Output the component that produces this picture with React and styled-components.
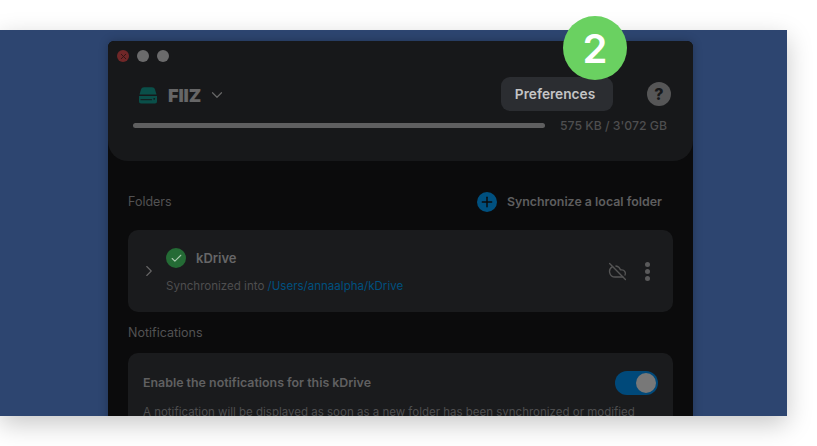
import React from 'react';
import styled, { createGlobalStyle } from 'styled-components';
import { ChevronDown, ChevronRight, CloudOff, Check, Plus, X } from 'lucide-react';

const GlobalStyle = createGlobalStyle`
  html, body {
    margin: 0;
    background: #ffffff;
    font-family: 'Inter', 'Liberation Sans', sans-serif;
    overflow: hidden;
  }
`;

export default function App() {
  return (
    <Page>
      <GlobalStyle />
      <Desktop>
        <Window>
          <Header>
            <TitleBar>
              <Light $color="#702728"><X size={9} strokeWidth={2.4} color="#2e1414" /></Light>
              <Light />
              <Light />
            </TitleBar>
            <DriveRow>
              <DriveButton>
                <DriveIcon />
                <DriveName>FIIZ</DriveName>
                <ChevronDown size={18} strokeWidth={1.6} color="#666" />
              </DriveButton>
              <HelpIcon>?</HelpIcon>
            </DriveRow>
            <StorageRow>
              <StorageBar />
              <StorageText>575 KB / 3'072 GB</StorageText>
            </StorageRow>
          </Header>
          <Body>
            <FolderHead>
              <SectionLabel>Folders</SectionLabel>
              <AddFolder>
                <AddIcon><Plus size={16} strokeWidth={2.2} color="#0b0b0c" /></AddIcon>
                Synchronize a local folder
              </AddFolder>
            </FolderHead>
            <FolderCard>
              <ChevronRight size={18} strokeWidth={1.5} color="#666" />
              <FolderInfo>
                <FolderTitle>
                  <StatusIcon><Check size={13} strokeWidth={2} color="#a8c9ae" /></StatusIcon>
                  <FolderName>kDrive</FolderName>
                </FolderTitle>
                <FolderPath>
                  Synchronized into <PathLink>/Users/annaalpha/kDrive</PathLink>
                </FolderPath>
              </FolderInfo>
              <FolderActions>
                <CloudOff size={19} strokeWidth={1.7} color="#555" />
                <MoreDots><i /><i /><i /></MoreDots>
              </FolderActions>
            </FolderCard>
            <NotifLabel>Notifications</NotifLabel>
            <NotifCard>
              <NotifRow>
                <NotifTitle>Enable the notifications for this kDrive</NotifTitle>
                <Toggle><Knob /></Toggle>
              </NotifRow>
              <NotifText>
                A notification will be displayed as soon as a new folder has been synchronized or modified
              </NotifText>
            </NotifCard>
          </Body>
        </Window>
        <PrefTip>Preferences</PrefTip>
      </Desktop>
      <StepBadge>2</StepBadge>
    </Page>
  );
}

function DriveIcon() {
  return (
    <svg width="20" height="17" viewBox="0 0 20 17">
      <path d="M1.5 7.5 L3 2.6 C3.5 1.1 4.6 0.3 6 0.3 H14 C15.4 0.3 16.5 1.1 17 2.6 L18.5 7.5 Z" fill="#0a4f49" />
      <path d="M1 9 H19 V14.5 C19 15.6 18.2 16.5 17 16.5 H3 C1.8 16.5 1 15.6 1 14.5 Z" fill="#0a4f49" />
      <rect x="2.5" y="12.2" width="11.5" height="1" fill="#17181a" />
      <circle cx="16.2" cy="11.8" r="0.9" fill="#17181a" />
    </svg>
  );
}

const Page = styled.div`
  position: relative;
  width: 817px;
  height: 446px;
  padding-top: 30px;
  box-sizing: border-box;
  background: #ffffff;
  overflow: hidden;
`;

const Desktop = styled.div`
  position: relative;
  width: 787px;
  height: 386px;
  padding: 11px 0 0 108px;
  box-sizing: border-box;
  background: #2d4570;
  box-shadow: 0 8px 24px rgba(0, 0, 0, 0.22);
  overflow: hidden;
`;

const Window = styled.div`
  width: 585px;
  height: 400px;
  background: #0b0b0c;
  border-radius: 6px 6px 0 0;
  box-shadow: 0 0 10px rgba(0, 0, 0, 0.25);
`;

const Header = styled.div`
  height: 120px;
  box-sizing: border-box;
  padding: 9px 25px 0 9px;
  background: #17181a;
  border-radius: 6px 6px 20px 20px;
`;

const TitleBar = styled.div`
  display: flex;
  gap: 8px;
`;

const Light = styled.span`
  display: flex;
  align-items: center;
  justify-content: center;
  width: 12px;
  height: 12px;
  border-radius: 50%;
  background: ${({ $color }) => $color || '#6b6b6c'};
`;

const DriveRow = styled.div`
  display: flex;
  align-items: center;
  justify-content: space-between;
  margin-top: 20px;
  padding-left: 21px;
  height: 24px;
`;

const DriveButton = styled.div`
  display: flex;
  align-items: center;
  margin-top: 2px;
`;

const DriveName = styled.span`
  margin: 0 7px 0 10px;
  font-size: 18px;
  font-weight: 900;
  color: #666667;
  letter-spacing: -0.1px;
`;

const HelpIcon = styled.span`
  display: flex;
  align-items: center;
  justify-content: center;
  width: 24px;
  height: 24px;
  margin-right: -3px;
  border-radius: 50%;
  background: #565657;
  color: #17181a;
  font-size: 16px;
  font-weight: 800;
`;

const StorageRow = styled.div`
  display: flex;
  align-items: center;
  gap: 15px;
  margin-top: 12px;
  padding-left: 16px;
`;

const StorageBar = styled.div`
  width: 412px;
  height: 5px;
  border-radius: 3px;
  background: #5f5f60;
`;

const StorageText = styled.span`
  font-size: 12.25px;
  font-weight: 500;
  color: #4e4e4f;
  white-space: nowrap;
`;

const Body = styled.div`
  padding: 29px 20px 0;
`;

const FolderHead = styled.div`
  display: flex;
  align-items: center;
  justify-content: space-between;
  height: 22px;
  padding-right: 11px;
`;

const SectionLabel = styled.span`
  font-size: 12.5px;
  color: #525253;
`;

const AddFolder = styled.div`
  display: flex;
  align-items: center;
  gap: 10px;
  font-size: 12.4px;
  font-weight: 600;
  color: #5e5e5f;
`;

const AddIcon = styled.span`
  display: flex;
  align-items: center;
  justify-content: center;
  width: 20px;
  height: 20px;
  margin-top: 1px;
  border-radius: 50%;
  background: #00507f;
`;

const FolderCard = styled.div`
  display: flex;
  align-items: center;
  height: 82px;
  box-sizing: border-box;
  margin-top: 18px;
  padding: 0 23px 0 12px;
  background: #1a1b1d;
  border-radius: 10px;
`;

const FolderInfo = styled.div`
  flex: 1;
  margin-left: 8px;
  padding-bottom: 1px;
`;

const FolderTitle = styled.div`
  display: flex;
  align-items: center;
  gap: 10px;
`;

const StatusIcon = styled.span`
  display: flex;
  align-items: center;
  justify-content: center;
  width: 20px;
  height: 20px;
  border-radius: 50%;
  background: #246b35;
`;

const FolderName = styled.span`
  font-size: 13px;
  font-weight: 600;
  color: #666667;
`;

const FolderPath = styled.div`
  margin-top: 11px;
  font-size: 11.55px;
  color: #4e4e4f;
`;

const PathLink = styled.span`
  color: #00507f;
`;

const FolderActions = styled.div`
  display: flex;
  align-items: center;
  gap: 18px;
`;

const MoreDots = styled.span`
  display: flex;
  flex-direction: column;
  gap: 2px;
  i {
    display: block;
    width: 5px;
    height: 5px;
    border-radius: 50%;
    background: #5a5a5b;
  }
`;

const NotifLabel = styled(SectionLabel)`
  display: block;
  margin-top: 13px;
`;

const NotifCard = styled.div`
  margin-top: 13px;
  padding: 18px 15px 0;
  background: #1a1b1d;
  border-radius: 10px;
  height: 100px;
  box-sizing: border-box;
`;

const NotifRow = styled.div`
  display: flex;
  align-items: center;
  justify-content: space-between;
`;

const NotifTitle = styled.span`
  padding-bottom: 2px;
  font-size: 12.4px;
  font-weight: 600;
  color: #606061;
`;

const Toggle = styled.span`
  display: flex;
  align-items: center;
  justify-content: flex-end;
  width: 43px;
  height: 24px;
  padding-right: 2px;
  box-sizing: border-box;
  border-radius: 12px;
  background: #00497a;
`;

const Knob = styled.span`
  width: 20px;
  height: 20px;
  border-radius: 50%;
  background: #787878;
`;

const NotifText = styled.p`
  margin: 9px 0 0;
  font-size: 11.5px;
  line-height: 16px;
  color: #4e4e4f;
  white-space: nowrap;
`;

const PrefTip = styled.div`
  position: absolute;
  left: 501px;
  top: 47px;
  width: 112px;
  height: 34px;
  padding-right: 4px;
  box-sizing: border-box;
  display: flex;
  align-items: center;
  justify-content: center;
  background: #2b2d31;
  border-radius: 9px;
  font-size: 13.7px;
  font-weight: 600;
  color: #c4c4c5;
`;

const StepBadge = styled.div`
  position: absolute;
  left: 563px;
  top: 16px;
  width: 64px;
  height: 64px;
  display: flex;
  align-items: center;
  justify-content: center;
  border-radius: 50%;
  background: #6ad161;
  color: #ffffff;
  font-size: 40px;
  font-weight: 600;
`;
